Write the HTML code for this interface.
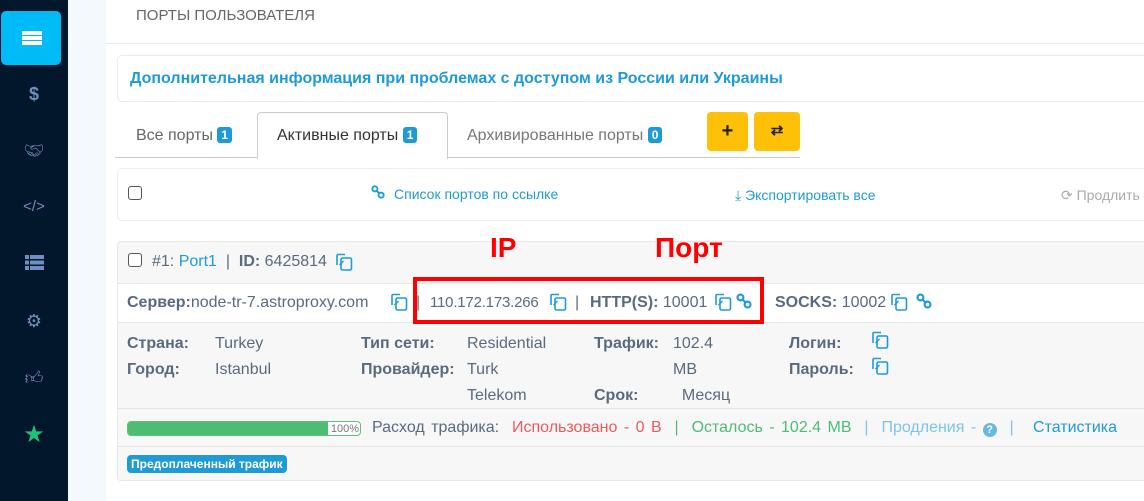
<!DOCTYPE html>
<html><head><meta charset="utf-8"><style>
*{box-sizing:border-box;margin:0;padding:0}
body{width:1144px;height:501px;overflow:hidden;background:#fff;font-family:"Liberation Sans",sans-serif;position:relative;color:#5a6a7e}
.a{position:absolute;white-space:nowrap}
.sb{left:0;top:0;width:68px;height:501px;background:#02162c}
.strip{left:68px;top:0;width:38px;height:501px;background:#f4f9fd}
.act{left:1px;top:11px;width:60px;height:54px;background:#00bbf5;border-radius:5px}
.ic{color:#6f8fbf;font-size:18px;width:68px;text-align:center;left:0}
.blue{color:#1e9bd7}
.b{font-weight:bold}
.badge{display:inline-block;background:#1e9bd7;color:#fff;font-size:12px;font-weight:bold;border-radius:3px;padding:1px 4px;vertical-align:1px}
.cb{width:14px;height:14px;border:1px solid #555;border-radius:3px;background:#fff}
.row{font-size:16px}
</style></head><body>
<svg width="0" height="0" style="position:absolute"><defs>
<symbol id="cp" viewBox="0 0 18 18"><path d="M2 12V2.5a1 1 0 0 1 1-1h7" fill="none" stroke="#1e9bd7" stroke-width="1.6"/><path d="M4.5 12 l4-4" fill="none" stroke="#1e9bd7" stroke-width="1.4"/><rect x="6" y="5" width="10.5" height="12" rx="1.5" fill="none" stroke="#1e9bd7" stroke-width="1.6"/></symbol>
<symbol id="lk" viewBox="0 0 18 18"><circle cx="5" cy="5" r="3.3" fill="none" stroke="#1e9bd7" stroke-width="2.4"/><circle cx="13" cy="13" r="3.3" fill="none" stroke="#1e9bd7" stroke-width="2.4"/><path d="M7 7l4 4" stroke="#1e9bd7" stroke-width="2.4"/></symbol>
</defs></svg>
<div class="a sb"></div>
<div class="a strip"></div>
<div class="a act"></div>
<svg class="a" style="left:22px;top:31px" width="20" height="14"><rect x="0" y="0" width="20" height="4" fill="#fff"/><rect x="0" y="5" width="20" height="4" fill="#fff"/><rect x="0" y="10" width="20" height="4" fill="#fff"/></svg>
<div class="a ic b" style="top:84px">$</div>
<div class="a ic" style="top:141px;font-size:16px">🤝︎</div>
<div class="a ic" style="top:198px;font-size:15px">&lt;/&gt;</div>
<svg class="a" style="left:25px;top:255px" width="19" height="15"><g fill="#6f8fbf"><rect x="0" y="0" width="4" height="4"/><rect x="5" y="0" width="14" height="4"/><rect x="0" y="5.5" width="4" height="4"/><rect x="5" y="5.5" width="14" height="4"/><rect x="0" y="11" width="4" height="4"/><rect x="5" y="11" width="14" height="4"/></g></svg>
<div class="a ic" style="top:311px">⚙</div>
<div class="a ic" style="top:367px">👍︎</div>
<div class="a ic" style="top:420px;color:#1fc07a;font-size:24px">★</div>

<div class="a" style="left:106px;top:43px;width:1038px;height:1px;background:#e6eaf0"></div>
<div class="a" style="left:136px;top:7px;font-size:15px;color:#666">ПОРТЫ ПОЛЬЗОВАТЕЛЯ</div>

<div class="a" style="left:117px;top:55px;width:1040px;height:47px;border:1px solid #e8eaf8;border-radius:5px"></div>
<div class="a b blue" style="left:130px;top:70px;font-size:16px">Дополнительная информация при проблемах с доступом из России или Украины</div>

<div class="a" style="left:115px;top:157px;width:685px;height:1px;background:#ccc"></div>
<div class="a" style="left:257px;top:112px;width:191px;height:47px;border:1px solid #ccc;border-bottom:none;border-radius:4px 4px 0 0;background:#fff"></div>
<div class="a" style="left:136px;top:127px;font-size:16px;color:#666">Все порты <span class="badge">1</span></div>
<div class="a" style="left:277px;top:127px;font-size:16px;color:#333">Активные порты <span class="badge">1</span></div>
<div class="a" style="left:467px;top:127px;font-size:16px;color:#777">Архивированные порты <span class="badge">0</span></div>
<div class="a" style="left:707px;top:112px;width:41px;height:39px;background:#ffc107;border-radius:4px;text-align:center;font-weight:bold;font-size:20px;line-height:38px;color:#222">+</div>
<div class="a" style="left:754px;top:112px;width:46px;height:39px;background:#ffc107;border-radius:4px;text-align:center;font-size:15px;line-height:38px;color:#222;font-weight:bold">⇄</div>

<div class="a" style="left:117px;top:168px;width:1040px;height:53px;border:1px solid #ebedf2;border-radius:5px"></div>
<div class="a cb" style="left:128px;top:186px"></div>
<svg class="a" style="left:371px;top:185px" width="14" height="14"><use href="#lk"/></svg>
<div class="a blue" style="left:394px;top:186px;font-size:14px">Список портов по ссылке</div>
<div class="a blue" style="left:735px;top:187px;font-size:14px">⤓ Экспортировать все</div>
<div class="a" style="left:1061px;top:187px;font-size:14px;color:#aaa">⟳ Продлить</div>

<div class="a" style="left:117px;top:241px;width:1040px;height:240px;border:1px solid #e8e8e8;border-radius:4px;background:#f7f7f7"></div>
<div class="a" style="left:118px;top:283px;width:1030px;height:40px;background:#fff;border-top:1px solid #e6e6e6;border-bottom:1px solid #e6e6e6"></div>
<div class="a" style="left:118px;top:408px;width:1030px;height:1px;background:#e4e4e4"></div>
<div class="a" style="left:118px;top:446px;width:1030px;height:1px;background:#e4e4e4"></div>
<div class="a cb" style="left:128px;top:253px"></div>
<div class="a row" style="left:152px;top:253px">#1: <span class="blue">Port1</span> &nbsp;| &nbsp;<b>ID:</b> 6425814</div>
<svg class="a" style="left:335px;top:253px" width="18" height="18"><use href="#cp"/></svg>

<div class="a row" style="left:127px;top:294px"><b>Сервер:</b>node-tr-7.astroproxy.com</div>
<svg class="a" style="left:390px;top:293px" width="18" height="18"><use href="#cp"/></svg>
<div class="a row" style="left:416px;top:294px">|</div>
<div class="a row" style="left:430px;top:294px;font-size:15px;letter-spacing:-0.2px">110.172.173.266</div>
<svg class="a" style="left:549px;top:293px" width="18" height="18"><use href="#cp"/></svg>
<div class="a row" style="left:575px;top:294px">|</div>
<div class="a row" style="left:590px;top:294px"><b>HTTP(S):</b> 10001</div>
<svg class="a" style="left:714px;top:293px" width="18" height="18"><use href="#cp"/></svg>
<svg class="a" style="left:736px;top:293px" width="16" height="16"><use href="#lk"/></svg>
<div class="a row" style="left:775px;top:294px"><b>SOCKS:</b> 10002</div>
<svg class="a" style="left:890px;top:293px" width="18" height="18"><use href="#cp"/></svg>
<svg class="a" style="left:916px;top:293px" width="16" height="16"><use href="#lk"/></svg>

<div class="a" style="left:413px;top:277px;width:351px;height:47px;border:4px solid #f00"></div>
<div class="a b" style="left:490px;top:232px;font-size:28px;color:#f00">IP</div>
<div class="a b" style="left:655px;top:232px;font-size:28px;color:#f00">Порт</div>

<div class="a row" style="left:127px;top:331px;line-height:26px"><b>Страна:</b><br><b>Город:</b></div>
<div class="a row" style="left:215px;top:331px;line-height:26px">Turkey<br>Istanbul</div>
<div class="a row" style="left:361px;top:331px;line-height:26px"><b>Тип сети:</b><br><b>Провайдер:</b></div>
<div class="a row" style="left:467px;top:331px;line-height:26px">Residential<br>Turk<br>Telekom</div>
<div class="a row" style="left:594px;top:331px;line-height:26px"><b>Трафик:</b><br><br><b>Срок:</b></div>
<div class="a row" style="left:673px;top:331px;line-height:26px">102.4<br>MB<br>&nbsp;&nbsp;Месяц</div>
<div class="a row" style="left:789px;top:331px;line-height:26px"><b>Логин:</b><br><b>Пароль:</b></div>
<svg class="a" style="left:871px;top:331px" width="18" height="18"><use href="#cp"/></svg>
<svg class="a" style="left:871px;top:357px" width="18" height="18"><use href="#cp"/></svg>

<div class="a" style="left:127px;top:421px;width:234px;height:15px;border:1px solid #5bc27b;border-radius:4px;background:#fff;overflow:hidden"><div style="width:200px;height:100%;background:#4dbd74"></div><span style="position:absolute;right:1px;top:1px;font-size:11px;color:#777">100%</span></div>
<div class="a row" style="left:372px;top:419px;word-spacing:2px">Расход трафика: &nbsp;<span style="color:#f0595d">Использовано - 0 B</span> &nbsp;<span style="color:#4dbd74">| &nbsp;Осталось - 102.4 MB</span> &nbsp;<span style="color:#7dc3e8">| &nbsp;Продления - <span style="display:inline-block;width:14px;height:14px;border-radius:50%;background:#6ab8e0;color:#fff;font-size:11px;text-align:center;line-height:14px;font-weight:bold;vertical-align:-1px">?</span> &nbsp;| </span>&nbsp; <span class="blue">Статистика</span></div>
<div class="a" style="left:127px;top:455px;background:#1e9bd7;color:#fff;font-size:12px;font-weight:bold;border-radius:4px;padding:2px 4px">Предоплаченный трафик</div>
</body></html>
